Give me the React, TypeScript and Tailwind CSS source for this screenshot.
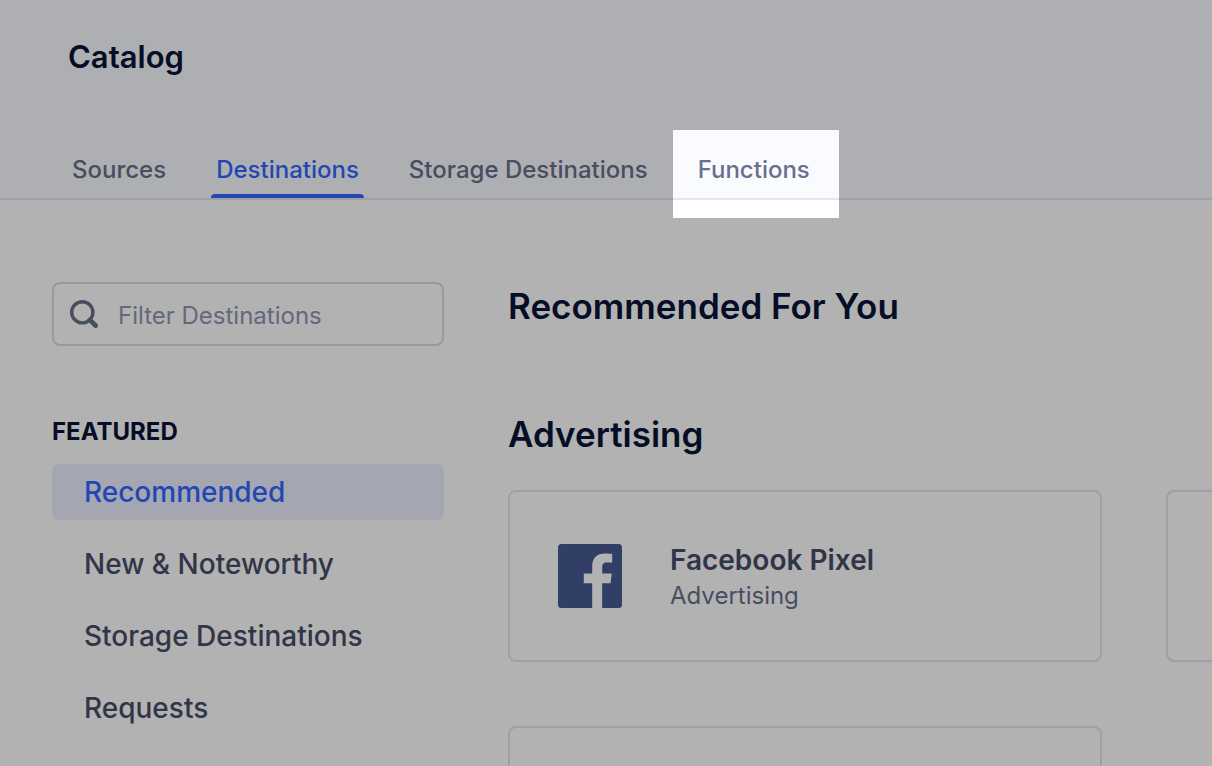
/**
 * App.tsx
 * Catalog page with the Functions tab spotlighted.
 */
import React from 'react';
import clsx from 'clsx';

const TABS = ['Sources', 'Destinations', 'Storage Destinations', 'Functions'];
const FEATURED = ['Recommended', 'New & Noteworthy', 'Storage Destinations', 'Requests'];

const SearchIcon: React.FC = () => (
  <svg viewBox="0 0 28 28" className="h-7 w-7 shrink-0" fill="none" stroke="#696f8c" aria-hidden="true">
    <circle cx="12.3" cy="12.3" r="10.6" strokeWidth="3.4" />
    <path d="M20 20l5.6 5.6" strokeWidth="4.8" strokeLinecap="round" />
  </svg>
);

const FacebookLogo: React.FC = () => (
  <svg viewBox="0 0 64 64" className="h-16 w-16 shrink-0" aria-hidden="true">
    <rect width="64" height="64" rx="3.5" fill="#475993" />
    <path fill="#fff" d="M34.2 64V39.2h-8.4v-9.8h8.4v-7.2c0-8.3 5.1-12.8 12.5-12.8 3.6 0 6.6.3 7.5.4v8.7H49c-4 0-4.8 1.9-4.8 4.7v6.2h9.6l-1.3 9.8h-8.3V64z" />
  </svg>
);

// Dims the whole page except the box it covers
const Spotlight: React.FC = () => (
  <span
    className="pointer-events-none absolute -top-4 -right-6 -bottom-5 -left-5 z-10 shadow-[0_0_0_3000px_rgba(0,0,0,0.3)]"
    aria-hidden="true"
  />
);

const Header: React.FC = () => (
  <header className="border-b-2 border-[#e4e6f0] bg-[#fafbff] px-[68px] pt-9">
    <h1 className="text-[31px] leading-[42px] font-semibold text-[#0a1337]">Catalog</h1>
    <nav className="mt-[68px] -ml-px flex gap-10 text-2xl leading-12 font-medium whitespace-nowrap" aria-label="Catalog">
      {TABS.map((tab) => {
        const active = tab === 'Destinations';
        return (
          <a
            key={tab}
            href="#"
            aria-current={active ? 'page' : undefined}
            className={clsx('relative flex flex-col px-[5px]', active ? 'text-[#3366ff]' : 'text-[#696f8c]')}
          >
            {tab}
            {active && <span className="-mx-[5px] h-1 rounded-t-sm bg-[#3366ff]" />}
            {tab === 'Functions' && <Spotlight />}
          </a>
        );
      })}
    </nav>
  </header>
);

const Sidebar: React.FC = () => (
  <aside className="w-[392px] shrink-0">
    <label className="flex h-16 items-center gap-5 rounded-lg border-2 border-[#d8dae5] px-4">
      <SearchIcon />
      <input
        type="text"
        aria-label="Filter Destinations"
        placeholder="Filter Destinations"
        className="min-w-0 flex-1 bg-transparent pt-1 text-2xl text-[#474d66] outline-none placeholder:text-[#8f95b2]"
      />
    </label>
    <h2 className="mt-[70px] text-2xl font-bold text-[#0a1337]">FEATURED</h2>
    <ul className="mt-4 flex flex-col gap-4">
      {FEATURED.map((item, i) => (
        <li key={item}>
          <a
            href="#"
            className={clsx(
              'block rounded-lg px-8 text-[28px] leading-14 font-medium',
              i === 0 ? 'bg-[#ebeeff] text-[#3366ff]' : 'text-[#474d66]'
            )}
          >
            {item}
          </a>
        </li>
      ))}
    </ul>
  </aside>
);

const Card: React.FC<{ children?: React.ReactNode }> = ({ children }) => (
  <div className="flex h-[172px] items-center gap-12 rounded-lg border-2 border-[#e4e6f0] px-12">{children}</div>
);

const App: React.FC = () => (
  <div className="h-screen overflow-hidden bg-white font-['Inter','Liberation_Sans',sans-serif]">
    <Header />
    <div className="flex gap-16 pt-[82px] pl-[52px]">
      <Sidebar />
      <main className="min-w-0 flex-1">
        <h2 className="text-[35px] leading-12 font-semibold text-[#0a1337]">Recommended For You</h2>
        <h3 className="mt-20 text-[35px] leading-12 font-semibold text-[#0a1337]">Advertising</h3>
        <div className="mt-8 grid grid-cols-[594px_594px] gap-16">
          <Card>
            <FacebookLogo />
            <div className="pt-1">
              <h4 className="text-[28px] leading-9 font-semibold text-[#474d66]">Facebook Pixel</h4>
              <p className="text-2xl leading-9 text-[#696f8c]">Advertising</p>
            </div>
          </Card>
          <Card />
          <Card />
        </div>
      </main>
    </div>
  </div>
);

export default App;
